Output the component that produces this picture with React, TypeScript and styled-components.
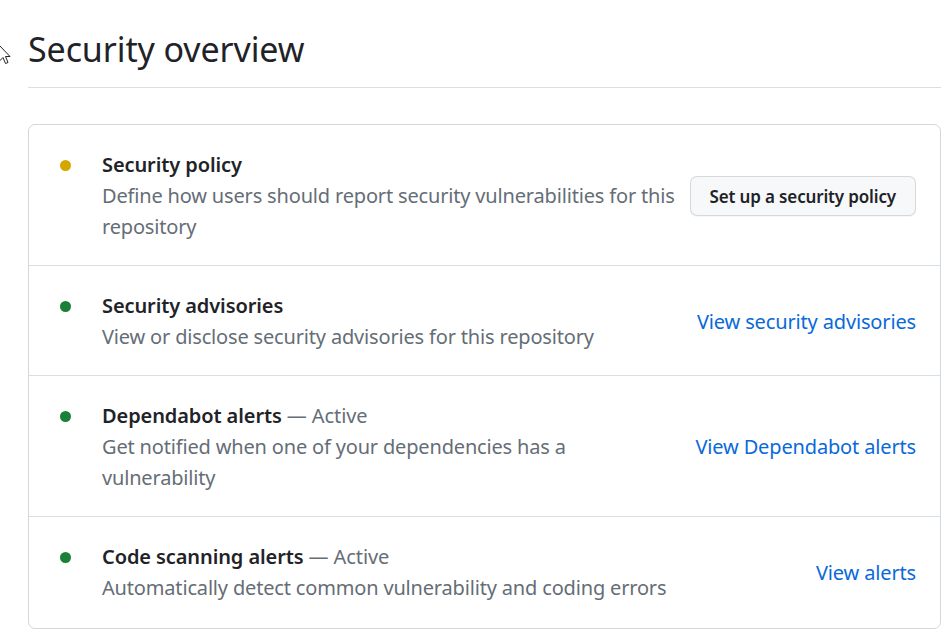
import { FC } from "react"
import styled, { createGlobalStyle } from "styled-components"

const GlobalStyle = createGlobalStyle`
  html, body {
    margin: 0;
    padding: 0;
    background: #ffffff;
  }
  body {
    font-family: "Noto Sans", "Liberation Sans", sans-serif;
    color: #1f2328;
    -webkit-font-smoothing: antialiased;
  }
`

type Status = "warn" | "ok"

interface Feature {
  title: string
  active?: boolean
  description: string
  status: Status
  action: { kind: "button" | "link"; label: string }
}

const features: Feature[] = [
  {
    title: "Security policy",
    description:
      "Define how users should report security vulnerabilities for this repository",
    status: "warn",
    action: { kind: "button", label: "Set up a security policy" },
  },
  {
    title: "Security advisories",
    description: "View or disclose security advisories for this repository",
    status: "ok",
    action: { kind: "link", label: "View security advisories" },
  },
  {
    title: "Dependabot alerts",
    active: true,
    description:
      "Get notified when one of your dependencies has a vulnerability",
    status: "ok",
    action: { kind: "link", label: "View Dependabot alerts" },
  },
  {
    title: "Code scanning alerts",
    active: true,
    description:
      "Automatically detect common vulnerability and coding errors",
    status: "ok",
    action: { kind: "link", label: "View alerts" },
  },
]

const Cursor: FC = () => (
  <CursorWrap>
    <svg width="12" height="20" viewBox="0 0 12 20">
      <path
        d="M0.5 0.5 L0.5 16 L4 12.5 L6.5 18.5 L9 17.5 L6.5 11.5 L11 11.5 Z"
        fill="#fff"
        stroke="#222"
        strokeWidth="1"
        strokeLinejoin="round"
      />
    </svg>
  </CursorWrap>
)

export default function App() {
  return (
    <>
      <GlobalStyle />
      <Page>
        <Cursor />
        <Subhead>
          <Heading>Security overview</Heading>
        </Subhead>
        <Box>
          {features.map((f) => (
            <Row key={f.title}>
              <DotCell>
                <Dot $status={f.status} />
              </DotCell>
              <Info>
                <Title>
                  <strong>{f.title}</strong>
                  {f.active && <Active> — Active</Active>}
                </Title>
                <Description>{f.description}</Description>
              </Info>
              {f.action.kind === "button" ? (
                <Button type="button">{f.action.label}</Button>
              ) : (
                <ActionLink href="#">{f.action.label}</ActionLink>
              )}
            </Row>
          ))}
        </Box>
      </Page>
    </>
  )
}

const Page = styled.div`
  position: relative;
  width: 913px;
  padding: 0 6px 0 28px;
`

const CursorWrap = styled.div`
  position: absolute;
  left: -1px;
  top: 45px;
  width: 12px;
  height: 20px;
`

const Subhead = styled.div`
  padding-top: 27px;
  padding-bottom: 15px;
  border-bottom: 1px solid #d8dee4;
`

const Heading = styled.h1`
  margin: 0;
  font-size: 34px;
  font-weight: 400;
  line-height: 45px;
  letter-spacing: -0.1px;
  color: #1f2328;
`

const Box = styled.div`
  margin-top: 36px;
  border: 1px solid #d0d7de;
  border-radius: 7px;
`

const Row = styled.div`
  display: flex;
  align-items: center;
  padding: 25px 24px 23px 26px;

  & + & {
    border-top: 1px solid #d8dee4;
  }

  &:last-child {
    padding-bottom: 25px;
  }
`

const DotCell = styled.div`
  align-self: flex-start;
  width: 20px;
  height: 30px;
  margin-right: 27px;
  display: flex;
  align-items: center;
  justify-content: center;
  flex: none;
`

const Dot = styled.span<{ $status: Status }>`
  width: 11px;
  height: 11px;
  border-radius: 50%;
  background: ${({ $status }) => ($status === "warn" ? "#d4a700" : "#1a7f37")};
`

const Info = styled.div`
  flex: 1 1 auto;
  min-width: 0;
  margin-right: 14px;
`

const Title = styled.div`
  font-size: 20px;
  line-height: 30px;
  color: #1f2328;
  letter-spacing: -0.1px;

  strong {
    font-weight: 600;
  }
`

const Active = styled.span`
  color: #656d76;
  font-weight: 400;
`

const Description = styled.div`
  font-size: 20px;
  line-height: 31px;
  letter-spacing: -0.17px;
  color: #656d76;
`

const Button = styled.button`
  flex: none;
  height: 40px;
  padding: 0 19px;
  font-family: inherit;
  font-size: 17px;
  font-weight: 600;
  letter-spacing: -0.15px;
  color: #1f2328;
  background: #f6f8fa;
  border: 1px solid rgba(31, 35, 40, 0.15);
  border-radius: 7px;
  box-shadow: 0 1px 0 rgba(31, 35, 40, 0.04);
  cursor: pointer;
`

const ActionLink = styled.a`
  flex: none;
  font-size: 20px;
  line-height: 30px;
  letter-spacing: -0.15px;
  color: #0969da;
  text-decoration: none;
`
